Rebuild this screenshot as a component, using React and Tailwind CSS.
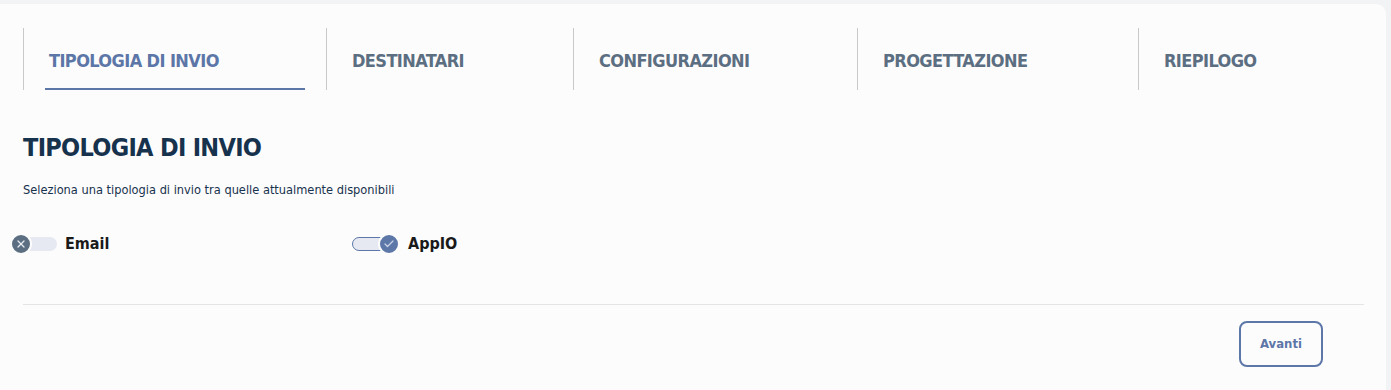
import { X, Check } from 'lucide-react'

const tabs = [
  { label: 'TIPOLOGIA DI INVIO', w: 'w-[303px]', active: true },
  { label: 'DESTINATARI', w: 'w-[247px]' },
  { label: 'CONFIGURAZIONI', w: 'w-[284px]' },
  { label: 'PROGETTAZIONE', w: 'w-[281px]' },
  { label: 'RIEPILOGO', w: 'w-[226px]' },
]

function Toggle({ on, label }) {
  return (
    <label className="flex items-center cursor-pointer select-none">
      <span className="relative flex items-center h-[22px] w-[48px]">
        <span
          className={
            on
              ? 'absolute left-[2px] top-[4px] h-[14px] w-[40px] rounded-full bg-[#e6e9f2] border border-[#5c77a8]'
              : 'absolute left-[10px] top-[4px] h-[14px] w-[37px] rounded-full bg-[#e6e9f2]'
          }
        />
        <span
          className={
            on
              ? 'absolute left-[28px] top-0 h-[22px] w-[22px] rounded-full bg-[#5c77a8] border-2 border-[#fcfcfc] flex items-center justify-center'
              : 'absolute left-0 top-0 h-[22px] w-[22px] rounded-full bg-[#5c6f82] border-2 border-[#fcfcfc] flex items-center justify-center'
          }
        >
          {on ? (
            <Check size={12} strokeWidth={2.5} color="#c9d3e6" />
          ) : (
            <X size={12} strokeWidth={2.5} color="#e8ecf1" />
          )}
        </span>
      </span>
      <span className={on ? 'ml-[10px] text-[16px] font-semibold text-[#1a1a1a]' : 'ml-[7px] text-[16px] font-semibold text-[#1a1a1a]'}>{label}</span>
    </label>
  )
}

export default function App() {
  return (
    <div
      className="w-[1391px] h-[390px] overflow-hidden bg-[#f2f3f5] pt-[4px]"
      style={{ fontFamily: '"Liberation Sans Narrow", "DejaVu Sans Condensed", Roboto, sans-serif' }}
    >
      <div className="w-[1386px] h-[400px] bg-[#fcfcfc] rounded-tr-[10px] pl-[23px] pr-[22px] pt-[24px]">
        {/* steps */}
        <div className="flex h-[62px]">
          {tabs.map(t => (
            <div key={t.label} className={`${t.w} shrink-0 border-l border-[#c9c9c9] px-[21px] flex flex-col`}>
              <div className={`flex-1 flex items-center pl-[4px] pt-[5px] text-[18px] font-bold tracking-[-0.6px] ${t.active ? 'text-[#5b76a7]' : 'text-[#5c6f82]'}`}>
                {t.label}
              </div>
              <div className={`h-[2px] ${t.active ? 'bg-[#5b76a7]' : 'bg-transparent'}`} />
            </div>
          ))}
        </div>

        <h2 className="mt-[42px] text-[25px] leading-[32px] font-bold tracking-[-0.7px] text-[#17324d]">TIPOLOGIA DI INVIO</h2>
        <p className="mt-[18px] text-[12.7px] leading-[16px] text-[#17324d]">
          Seleziona una tipologia di invio tra quelle attualmente disponibili
        </p>

        <div className="mt-[34px] ml-[-13px] flex h-[22px]">
          <div className="w-[340px]">
            <Toggle on={false} label="Email" />
          </div>
          <div>
            <Toggle on label="AppIO" />
          </div>
        </div>

        <div className="mt-[50px] border-t border-[#e4e4e4]" />

        <div className="flex justify-end pr-[41px] pt-[16px]">
          <button className="w-[84px] h-[46px] rounded-[8px] border-2 border-[#5c77a8] text-[13px] font-bold text-[#5c77a8]">
            Avanti
          </button>
        </div>
      </div>
    </div>
  )
}
